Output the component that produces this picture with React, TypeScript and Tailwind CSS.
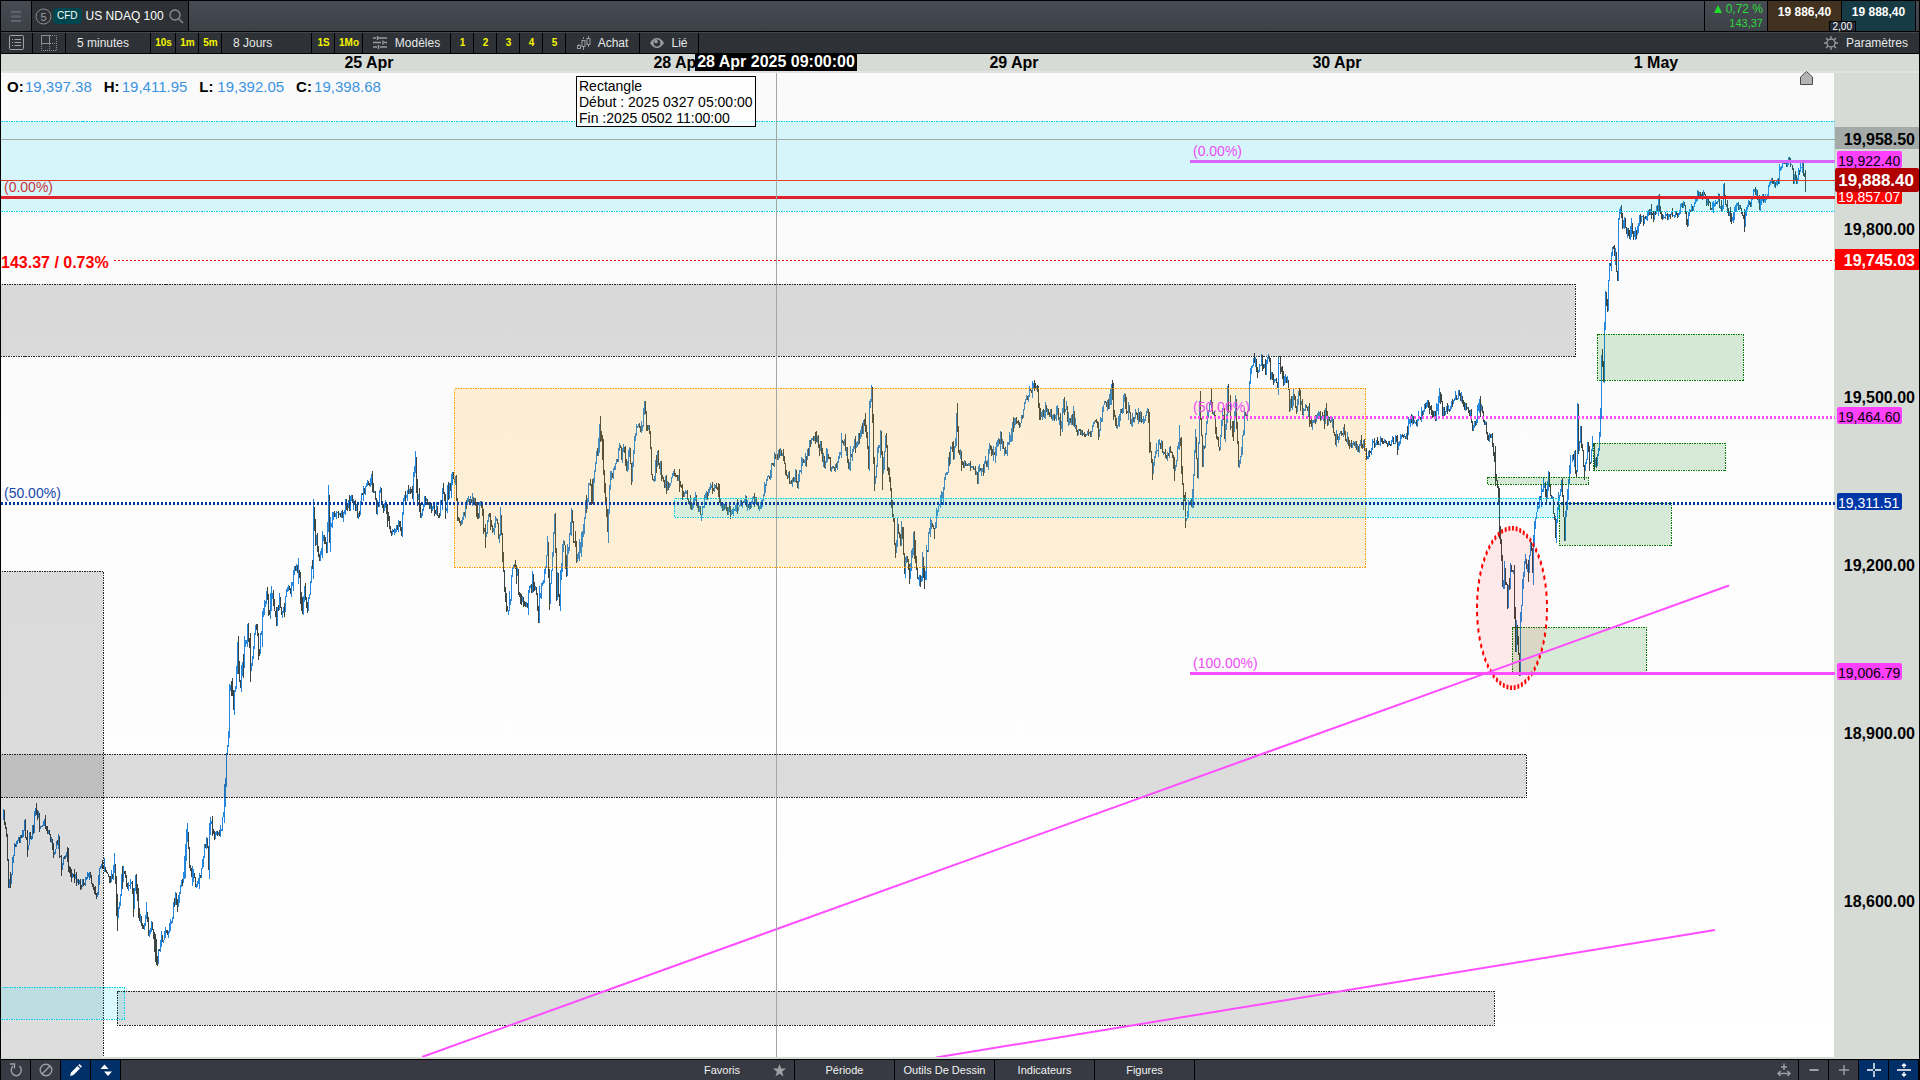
import clsx from 'clsx';

type Point = [number, number];

// swing points of the 5 minute series, in chart units
const SWINGS: Point[] = [
  [2, 818], [3, 816], [6, 830], [8, 882], [10, 877], [14, 844], [18, 840], [24, 825], [27, 845], [33, 826],
  [35, 811], [39, 825], [43, 822], [49, 834], [53, 851], [58, 841], [61, 866], [67, 851], [69, 872], [76, 879],
  [82, 885], [87, 873], [91, 881], [96, 894], [99, 871], [104, 864], [109, 881], [114, 869], [117, 912],
  [123, 868], [127, 887], [131, 884], [133, 912], [135, 882], [139, 917], [143, 928], [146, 908], [148, 932],
  [151, 930], [157, 963], [160, 941], [164, 935], [169, 930], [175, 898], [178, 906], [184, 866], [187, 833],
  [189, 862], [195, 887], [198, 884], [202, 860], [206, 841], [208, 860], [210, 818], [214, 834], [218, 835],
  [222, 823], [224, 796], [226, 760], [228, 733], [229, 694], [231, 685], [233, 710], [237, 651], [240, 687],
  [244, 651], [247, 626], [250, 667], [256, 625], [258, 658], [263, 612], [266, 596], [269, 612], [271, 594],
  [276, 623], [279, 594], [282, 616], [287, 587], [291, 591], [294, 567], [298, 569], [302, 608], [304, 587],
  [307, 605], [312, 562], [313, 508], [315, 545], [316, 537], [319, 557], [324, 535], [326, 551], [328, 503],
  [329, 537], [334, 514], [341, 514], [347, 505], [352, 498], [358, 517], [362, 494], [368, 484], [372, 480],
  [376, 510], [380, 491], [382, 508], [386, 503], [391, 532], [395, 532], [398, 525], [401, 530], [403, 501],
  [409, 489], [412, 491], [415, 462], [417, 494], [420, 514], [424, 501], [433, 507], [439, 514], [442, 489],
  [445, 507], [452, 476], [455, 484], [457, 519], [461, 523], [465, 505], [473, 498], [477, 519], [480, 501],
  [485, 541], [488, 516], [493, 530], [495, 516], [499, 541], [500, 507], [502, 562], [505, 601], [508, 614],
  [512, 573], [515, 562], [520, 601], [526, 605], [533, 576], [538, 616], [541, 584], [545, 573], [547, 537],
  [549, 601], [554, 516], [556, 598], [557, 573], [559, 603], [563, 541], [566, 573], [571, 519], [576, 558],
  [582, 533], [586, 501], [590, 480], [591, 493], [597, 450], [600, 428], [604, 487], [606, 513], [607, 523],
  [610, 477], [615, 467], [619, 443], [621, 460], [623, 445], [626, 467], [629, 450], [631, 483], [634, 437],
  [637, 427], [642, 430], [644, 408], [646, 428], [649, 427], [651, 473], [653, 480], [657, 453], [662, 477],
  [667, 487], [672, 473], [678, 477], [682, 497], [686, 493], [691, 508], [695, 497], [700, 513], [705, 498],
  [712, 487], [718, 492], [721, 507], [726, 507], [732, 513], [736, 507], [744, 500], [749, 507], [753, 498],
  [758, 508], [761, 503], [764, 487], [769, 477], [774, 457], [778, 455], [782, 453], [785, 470], [791, 483],
  [795, 473], [797, 483], [801, 463], [805, 460], [811, 440], [816, 437], [820, 450], [824, 463], [826, 450],
  [831, 472], [837, 463], [842, 440], [846, 447], [848, 467], [853, 447], [860, 432], [865, 420], [868, 463],
  [869, 403], [871, 389], [874, 490], [877, 450], [880, 437], [882, 480], [885, 437], [888, 473], [891, 507],
  [893, 517], [895, 557], [897, 520], [900, 543], [901, 522], [904, 573], [906, 557], [909, 580], [911, 553],
  [913, 540], [915, 563], [920, 587], [922, 563], [924, 583], [926, 553], [931, 523], [934, 530], [938, 507],
  [942, 493], [946, 473], [951, 447], [953, 457], [955, 440], [956, 414], [958, 450], [962, 463], [972, 467],
  [977, 475], [984, 468], [989, 447], [993, 453], [1000, 438], [1005, 453], [1009, 443], [1014, 420],
  [1019, 427], [1024, 407], [1029, 393], [1034, 385], [1037, 392], [1040, 418], [1046, 408], [1052, 417],
  [1057, 413], [1060, 427], [1063, 403], [1069, 423], [1073, 418], [1077, 432], [1084, 435], [1090, 432],
  [1095, 420], [1098, 432], [1102, 410], [1105, 402], [1108, 408], [1111, 388], [1114, 413], [1116, 428],
  [1120, 413], [1124, 400], [1132, 423], [1136, 413], [1144, 422], [1147, 413], [1149, 440], [1152, 473],
  [1155, 453], [1159, 442], [1166, 457], [1170, 450], [1174, 473], [1179, 438], [1182, 480], [1185, 520],
  [1189, 503], [1192, 497], [1195, 433], [1197, 470], [1199, 403], [1202, 463], [1206, 423], [1211, 395],
  [1215, 433], [1219, 450], [1222, 413], [1224, 433], [1227, 400], [1232, 433], [1235, 410], [1238, 463],
  [1241, 447], [1244, 413], [1247, 420], [1250, 370], [1254, 360], [1258, 373], [1261, 355], [1265, 373],
  [1268, 357], [1271, 377], [1277, 383], [1278, 360], [1283, 383], [1287, 377], [1289, 407], [1294, 397],
  [1296, 408], [1298, 395], [1302, 410], [1307, 408], [1311, 423], [1318, 413], [1324, 420], [1325, 408],
  [1328, 422], [1332, 420], [1335, 440], [1340, 432], [1344, 432], [1349, 447], [1353, 442], [1358, 447],
  [1361, 440], [1367, 457], [1372, 445], [1378, 442], [1384, 440], [1391, 445], [1395, 438], [1397, 448],
  [1401, 438], [1406, 437], [1409, 420], [1417, 423], [1424, 407], [1428, 403], [1431, 412], [1435, 415],
  [1439, 390], [1442, 413], [1448, 407], [1453, 400], [1458, 393], [1462, 403], [1468, 408], [1472, 427],
  [1476, 420], [1479, 400], [1483, 420], [1487, 433], [1491, 437], [1494, 460], [1498, 500], [1499, 530],
  [1501, 560], [1502, 587], [1504, 570], [1507, 600], [1511, 567], [1513, 573], [1515, 650], [1516, 620],
  [1517, 640], [1519, 670], [1520, 623], [1522, 587], [1525, 560], [1528, 573], [1530, 540], [1532, 567],
  [1534, 527], [1537, 507], [1540, 497], [1543, 483], [1546, 500], [1548, 474], [1551, 497], [1555, 527],
  [1558, 497], [1561, 483], [1564, 540], [1566, 507], [1569, 470], [1570, 455], [1574, 457], [1576, 477],
  [1577, 408], [1578, 453], [1580, 430], [1584, 477], [1587, 443], [1589, 467], [1592, 445], [1596, 468],
  [1598, 450], [1599, 433], [1600, 410], [1601, 357], [1603, 375], [1604, 323], [1605, 293], [1607, 305],
  [1609, 270], [1612, 247], [1615, 258], [1617, 275], [1618, 220], [1620, 212], [1622, 227], [1624, 222],
  [1629, 237], [1631, 227], [1633, 240], [1637, 227], [1639, 217], [1643, 220], [1647, 212], [1651, 212],
  [1653, 218], [1658, 203], [1661, 218], [1665, 218], [1673, 215], [1679, 212], [1681, 203], [1683, 207],
  [1687, 222], [1689, 212], [1692, 210], [1695, 198], [1702, 193], [1707, 203], [1713, 207], [1718, 198],
  [1721, 212], [1723, 190], [1727, 210], [1731, 217], [1735, 212], [1737, 203], [1742, 213], [1744, 226],
  [1746, 207], [1750, 203], [1753, 190], [1757, 195], [1759, 208], [1762, 198], [1765, 200], [1769, 183],
  [1773, 182], [1777, 185], [1780, 168], [1783, 163], [1789, 162], [1793, 177], [1797, 180], [1800, 165],
  [1802, 162], [1805, 182],
];

const buildCandles = () => {
  let seed = 7;
  const random = () => {
    seed = (seed * 16807) % 2147483647;
    return seed / 2147483647;
  };
  let up = '';
  let down = '';
  let segment = 0;
  let open = SWINGS[0][1];
  for (let x = 3; x <= 1805; x += 1) {
    let high = open;
    let low = open;
    while (segment < SWINGS.length - 2 && SWINGS[segment + 1][0] <= x) {
      segment += 1;
      high = Math.min(high, SWINGS[segment][1]);
      low = Math.max(low, SWINGS[segment][1]);
    }
    const [x0, y0] = SWINGS[segment];
    const [x1, y1] = SWINGS[segment + 1];
    const range = Math.min(Math.abs(y1 - y0), 40);
    const close = y0 + ((y1 - y0) * (x - x0)) / (x1 - x0) + (random() - 0.5) * (6 + range * 0.3);
    const wick = random() > 0.6 ? 4 + range * 0.25 : 2;
    high = Math.round(Math.min(high, close) - random() * wick);
    low = Math.round(Math.max(low, close) + random() * wick);
    const bar = `M${x}.5 ${high}V${low}`;
    if (close < open) {
      up += bar;
    } else {
      down += bar;
    }
    open = close;
  }
  return { up, down };
};

const candles = buildCandles();

const ZONES = [
  { x: 0, y: 121, w: 1836, h: 90, fill: '#00e5ff', stroke: '#00cfee' },
  { x: -2, y: 284, w: 1577, h: 72, fill: '#1c1c1c', stroke: '#222222' },
  { x: -2, y: 571, w: 105, h: 500, fill: '#1c1c1c', stroke: '#222222' },
  { x: -2, y: 754, w: 1528, h: 43, fill: '#1c1c1c', stroke: '#222222' },
  { x: 117, y: 991, w: 1377, h: 34, fill: '#1c1c1c', stroke: '#222222' },
  { x: -2, y: 987, w: 126, h: 32, fill: '#00e5ff', stroke: '#00cfee' },
  { x: 454, y: 388, w: 911, h: 179, fill: '#ffa500', stroke: '#ff9d00' },
  { x: 674, y: 498, w: 885, h: 19, fill: '#00e5ff', stroke: '#00cfee' },
  { x: 1487, y: 477, w: 101, h: 7, fill: '#008000', stroke: '#007a00' },
  { x: 1559, y: 503, w: 112, h: 42, fill: '#008000', stroke: '#007a00' },
  { x: 1593, y: 443, w: 132, h: 27, fill: '#008000', stroke: '#007a00' },
  { x: 1597, y: 334, w: 146, h: 46, fill: '#008000', stroke: '#007a00' },
  { x: 1512, y: 627, w: 134, h: 47, fill: '#008000', stroke: '#007a00' },
];

const DAYS = [
  { label: '25 Apr', x: 369 },
  { label: '28 Apr', x: 678 },
  { label: '29 Apr', x: 1014 },
  { label: '30 Apr', x: 1337 },
  { label: '1 May', x: 1656 },
];

const PRICES = [
  { label: '19,800.00', y: 229 },
  { label: '19,500.00', y: 397 },
  { label: '19,200.00', y: 565 },
  { label: '18,900.00', y: 733 },
  { label: '18,600.00', y: 901 },
];

const LEVELS = [
  { label: '19,922.40', y: 161, fill: '#ff40ff', text: '#000000' },
  { label: '19,857.07', y: 197, fill: '#ff0000', text: '#ffffff' },
  { label: '19,464.60', y: 417, fill: '#ff40ff', text: '#000000' },
  { label: '19,311.51', y: 503, fill: '#0037a8', text: '#ffffff' },
  { label: '19,006.79', y: 673, fill: '#ff40ff', text: '#000000' },
];

const OHLC = [
  { key: 'O', value: '19,397.38' },
  { key: 'H', value: '19,411.95' },
  { key: 'L', value: '19,392.05' },
  { key: 'C', value: '19,398.68' },
];

const Chart: React.FC = () => (
  <svg viewBox="1 54 1918 1005" className="h-full w-full">
    <defs>
      <linearGradient id="plot" x1="0" y1="0" x2="0" y2="1">
        <stop offset="0" stopColor="#fafafa" />
        <stop offset="1" stopColor="#ffffff" />
      </linearGradient>
      <clipPath id="plot-clip">
        <rect x="1" y="73" width="1834" height="984" />
      </clipPath>
    </defs>
    <rect x="1" y="54" width="1918" height="1005" fill="#d6dbd6" />
    <rect x="1" y="71" width="1918" height="2" fill="#e2e2e2" />
    <rect x="1" y="73" width="1833" height="984" fill="url(#plot)" />

    <g className="font-bold" fontSize="16" textAnchor="middle">
      {DAYS.map((day) => (
        <text key={day.label} x={day.x} y="68">
          {day.label}
        </text>
      ))}
    </g>

    <g clipPath="url(#plot-clip)">
      <g fill="none" strokeWidth="1" shapeRendering="crispEdges">
        <path d={candles.down} stroke="#3d4543" />
        <path d={candles.up} stroke="#2487dd" />
      </g>
      {ZONES.map((zone) => (
        <g key={`${zone.x}-${zone.y}`} shapeRendering="crispEdges">
          <rect x={zone.x} y={zone.y} width={zone.w} height={zone.h} fill={zone.fill} fillOpacity="0.15" />
          <rect
            x={zone.x + 0.5}
            y={zone.y + 0.5}
            width={zone.w}
            height={zone.h}
            fill="none"
            stroke={zone.stroke}
            strokeDasharray="2 1 1 1"
          />
        </g>
      ))}

      {/* capitulation low */}
      <circle
        r="35"
        transform="translate(1512 608) scale(1 2.28)"
        fill="#ff0000"
        fillOpacity="0.08"
        stroke="#ff0000"
        strokeWidth="2"
        strokeDasharray="1.9 1.76"
      />
      <g stroke="#ff4dff" strokeWidth="2">
        <path d="M422 1057L1729 585.5" />
        <path d="M936 1057.5L1715 930" />
      </g>

      <g shapeRendering="crispEdges" fill="none">
        <path d="M1190 161.5H1835" stroke="#d966ff" strokeWidth="3" />
        <path d="M1190 417.5H1835" stroke="#ff4dff" strokeWidth="3" strokeDasharray="2 2" />
        <path d="M1190 673.5H1835" stroke="#ff4dff" strokeWidth="3" />
        <path d="M1 503.5H1835" stroke="#0037a0" strokeWidth="3" strokeDasharray="2 2" />
        <path d="M1 197.5H1835" stroke="#e0202a" strokeWidth="3" />
        <path d="M114 260.5H1835" stroke="#f00000" strokeDasharray="2 2" />
        <path d="M1 180.5H1835" stroke="#e63a28" />
        <path d="M1 139.5H1835M776.5 73V1057" stroke="#a2a7a5" />
      </g>
    </g>

    <g fontSize="14">
      <text x="4" y="192" fill="#cf3340">(0.00%)</text>
      <text x="4" y="498" fill="#1a48ad">(50.00%)</text>
      <g fill="#ee4df5">
        <text x="1193" y="156">(0.00%)</text>
        <text x="1193" y="412">(50.00%)</text>
        <text x="1193" y="668">(100.00%)</text>
      </g>
    </g>
    <text x="1" y="268" fontSize="16" fill="#ff0000" className="font-bold">
      143.37 / 0.73%
    </text>

    <path d="M1800.5 84.5V77L1806.5 71.5L1812.5 77V84.5Z" fill="#b4b4b4" stroke="#4a4a4a" />

    {/* price scale */}
    <rect x="1835" y="127" width="84" height="22" fill="#a3aaa8" />
    <rect x="1835" y="249" width="84" height="21" fill="#ff0000" />
    {LEVELS.map((level) => (
      <g key={level.label}>
        <rect x="1837" y={level.y - 10} width="65" height="17" rx="2" fill={level.fill} />
        <text x="1838" y={level.y + 5} fontSize="14" fill={level.text}>
          {level.label}
        </text>
      </g>
    ))}
    <rect x="1835" y="168" width="84" height="24" rx="2" fill="#b00000" />
    <g className="font-bold" fontSize="16" textAnchor="end">
      <text x="1915" y="145">19,958.50</text>
      <text x="1914" y="186" fontSize="17" fill="#ffffff">19,888.40</text>
      <text x="1915" y="266" fill="#ffffff">19,745.03</text>
      {PRICES.map((price) => (
        <text key={price.label} x="1915" y={price.y + 6}>
          {price.label}
        </text>
      ))}
    </g>

    {/* crosshair time */}
    <rect x="695" y="54" width="162" height="17" />
    <text x="776" y="67" fontSize="16" textAnchor="middle" fill="#ffffff" className="font-bold">
      28 Apr 2025 09:00:00
    </text>
  </svg>
);

type CellProps = {
  className: string;
  label?: string;
  children: React.ReactNode;
};

const ToolCell: React.FC<CellProps> = ({ className, label, children }) => (
  <button
    type="button"
    aria-label={label}
    className={clsx('flex h-full shrink-0 items-center border-r border-black pb-px', className)}
  >
    {children}
  </button>
);

const QuickCell: React.FC<CellProps> = ({ className, children }) => (
  <ToolCell className={clsx('justify-center pl-px text-[10px] font-bold text-[#f5f500]', className)}>
    {children}
  </ToolCell>
);

const TopBar: React.FC = () => (
  <header className="flex h-8 shrink-0 border-t border-b border-black bg-linear-to-b from-[#474c54] to-[#3c4148] text-xs text-white">
    <button type="button" aria-label="Menu" className="flex w-[31px] items-center justify-center border-r border-black">
      <svg width="10" height="11" stroke="#62666c" strokeWidth="2">
        <path d="M0 1H10M0 5.5H10M0 10H10" />
      </svg>
    </button>
    <div className="flex items-center border-r border-black bg-[#2e3236] px-[3px]">
      <svg width="17" height="17" viewBox="0 0 17 17">
        <circle cx="8.5" cy="8.5" r="7.5" fill="none" stroke="#8b8f93" />
        <text x="8.5" y="12.5" fontSize="11" textAnchor="middle" fill="#9a9da1">5</text>
      </svg>
      <span className="ml-px rounded-sm bg-[#00474f] px-1 text-[10px] leading-4">CFD</span>
      <span className="ml-1">US NDAQ 100</span>
      <button type="button" aria-label="Rechercher" className="ml-1">
        <svg width="17" height="17" fill="none" stroke="#8b8f93" strokeWidth="1.3">
          <circle cx="7" cy="7" r="5" />
          <path d="M10.6 10.6L15 15" />
        </svg>
      </button>
    </div>
    <div className="relative ml-auto flex">
      <div className="flex w-16 flex-col items-end border-x border-black pt-px pr-1 leading-[14px] text-[#2fd83a]">
        <span className="flex items-center gap-1">
          <svg width="8" height="8" fill="#22dd2e">
            <path d="M4 0L8 8H0Z" />
          </svg>
          0,72 %
        </span>
        <span className="text-[11px]">143,37</span>
      </div>
      <button type="button" className="w-[74px] border-r border-black bg-[#41311f] pb-2 font-bold">
        19 886,40
      </button>
      <button type="button" className="w-[74px] border-r border-black bg-[#173b45] pb-2 font-bold">
        19 888,40
      </button>
      <span className="w-[3px]" />
      <span className="absolute right-[63px] bottom-0 border border-b-0 border-black bg-[#242b37] px-[3px] text-[10px] leading-[9px]">
        2,00
      </span>
    </div>
  </header>
);

const Toolbar: React.FC = () => (
  <nav className="flex h-[22px] shrink-0 border-t border-b border-t-[#44484d] border-b-black bg-[#2e3236] text-xs text-[#e6e8ea]">
    <ToolCell label="Liste" className="w-8 justify-center">
      <svg width="15" height="15" fill="none" stroke="#a0a3a6">
        <rect x="0.5" y="0.5" width="14" height="14" rx="1" />
        <path d="M3 4.5H4M5.5 4.5H12M3 7.5H4M5.5 7.5H12M3 10.5H4M5.5 10.5H12" />
      </svg>
    </ToolCell>
    <ToolCell label="Disposition" className="w-[33px] justify-center">
      <svg width="16" height="16" fill="none" stroke="#8d9093">
        <rect x="0.5" y="0.5" width="8" height="8" />
        <path d="M9 0.5H15.5V15.5H0.5V9M8.5 9V15M9 8.5H15" strokeDasharray="1 1" />
      </svg>
    </ToolCell>
    <ToolCell className="w-[85px] pl-[11px]">5 minutes</ToolCell>
    <QuickCell className="w-[25px]">10s</QuickCell>
    <QuickCell className="w-[23px]">1m</QuickCell>
    <QuickCell className="w-[23px]">5m</QuickCell>
    <ToolCell className="w-[90px] pl-[11px]">8 Jours</ToolCell>
    <QuickCell className="w-[23px]">1S</QuickCell>
    <QuickCell className="w-[28px]">1Mo</QuickCell>
    <ToolCell className="w-[88px] justify-center gap-2">
      <svg width="14" height="13" fill="none" stroke="#9a9da0" strokeWidth="1.4">
        <path d="M0 2H3M5 2H14M4.5 0V4M0 6.5H8M11 6.5H14M10 4.5V8.5M0 11H4M7 11H14M5.5 9V13" />
      </svg>
      Modèles
    </ToolCell>
    <QuickCell className="w-[23px]">1</QuickCell>
    <QuickCell className="w-[23px]">2</QuickCell>
    <QuickCell className="w-[23px]">3</QuickCell>
    <QuickCell className="w-[23px]">4</QuickCell>
    <QuickCell className="w-[23px]">5</QuickCell>
    <ToolCell className="w-[74px] justify-center gap-[7px]">
      <svg width="14" height="14" fill="none" stroke="#9a9da0">
        <path d="M2 8V9M2 12V13M6.5 1V3M6.5 11V14M11.5 0V2M11.5 8V11" />
        <rect x="0.5" y="9.5" width="3" height="3" />
        <rect x="5" y="4.5" width="3" height="6" />
        <rect x="10" y="2.5" width="3" height="6" />
      </svg>
      Achat
    </ToolCell>
    <ToolCell className="w-[59px] justify-center gap-[7px]">
      <svg width="14" height="12" viewBox="0 0 14 12">
        <path d="M0 6Q3 1 7 1T14 6Q11 11 7 11T0 6Z" fill="#9a9da0" />
        <circle cx="7" cy="6" r="3.4" fill="#2e3236" />
        <circle cx="6" cy="4.6" r="1.8" fill="#9a9da0" />
      </svg>
      Lié
    </ToolCell>
    <button type="button" className="ml-auto flex items-center gap-2 pr-[11px] pb-px">
      <svg width="14" height="14" fill="none" stroke="#9a9da0" strokeWidth="1.3">
        <circle cx="7" cy="7" r="4" />
        <path d="M7 0V2.5M7 11.5V14M0 7H3M11 7H14M2 2L4 4M10 10L12 12M12 2L10 4M4 10L2 12" />
      </svg>
      Paramètres
    </button>
  </nav>
);

type FootIconProps = {
  label: string;
  active?: boolean;
  children: React.ReactNode;
};

const FootIcon: React.FC<FootIconProps> = ({ label, active, children }) => (
  <button
    type="button"
    aria-label={label}
    className={clsx(
      'flex w-[30px] items-center justify-center border-r border-black',
      active ? 'bg-[#003067] text-white' : 'text-[#9da0a4]',
    )}
  >
    <svg width="14" height="14" viewBox="0 0 14 14" fill="none" stroke="currentColor" strokeWidth="1.4">
      {children}
    </svg>
  </button>
);

const BottomBar: React.FC = () => (
  <footer className="flex h-[21px] shrink-0 justify-between border-t border-black bg-[#373a42] text-[11px] text-[#f2f3f4]">
    <div className="flex">
      <FootIcon label="Actualiser">
        <path d="M4 3A5 5.5 0 1 0 10.5 3" />
        <path d="M1 1H5.5V5.5" />
      </FootIcon>
      <FootIcon label="Effacer">
        <circle cx="7" cy="7" r="5.8" />
        <path d="M3 11L11 3" />
      </FootIcon>
      <FootIcon label="Dessiner" active>
        <path d="M1 13L2 9.5L8.5 3L11 5.5L4.5 12ZM9.3 2.2L10.5 1L13 3.5L11.8 4.7Z" fill="currentColor" stroke="none" />
      </FootIcon>
      <FootIcon label="Échelle" active>
        <path d="M1.5 6L5.5 1.5L9.5 6ZM5 8.5H13L9 13Z" fill="currentColor" stroke="none" />
      </FootIcon>
    </div>
    <div className="flex">
      <div className="flex w-[100px] items-center justify-between border-r border-black pr-2 pl-[9px]">
        <button type="button">Favoris</button>
        <button type="button" aria-label="Ajouter aux favoris">
          <svg width="13" height="13" viewBox="0 0 13 13" fill="#9da0a4">
            <path d="M6.5 0L8.2 4.6H13L9.1 7.7L10.5 12.6L6.5 9.7L2.5 12.6L3.9 7.7L0 4.6H4.8Z" />
          </svg>
        </button>
      </div>
      {['Période', 'Outils De Dessin', 'Indicateurs', 'Figures'].map((item) => (
        <button key={item} type="button" className="w-[100px] border-r border-black">
          {item}
        </button>
      ))}
    </div>
    <div className="flex">
      <FootIcon label="Ajuster">
        <path d="M7 0.5V7M4 4H10M1 10.5H13M3.5 8L1 10.5L3.5 13M10.5 8L13 10.5L10.5 13" />
      </FootIcon>
      <FootIcon label="Zoom arrière">
        <path d="M2.5 7H11.5" strokeWidth="2" />
      </FootIcon>
      <FootIcon label="Zoom avant">
        <path d="M2 7H12M7 2V12" />
      </FootIcon>
      <FootIcon label="Réticule" active>
        <path d="M0 7H6M8 7H14M7 0V6M7 8V14" />
      </FootIcon>
      <FootIcon label="Échelle verticale" active>
        <path d="M0 7H14M7 1V5M5 3L7 1L9 3M7 9V13M5 11L7 13L9 11" />
      </FootIcon>
    </div>
  </footer>
);

const App: React.FC = () => (
  <div className="flex h-screen flex-col border-x border-black bg-[#d6dbd6] font-['Liberation_Sans',Arial,sans-serif]">
    <TopBar />
    <Toolbar />
    <main className="relative min-h-0 flex-1">
      <Chart />
      <dl className="absolute top-6 left-1.5 flex gap-3 text-[15px] leading-[18px]">
        {OHLC.map((item) => (
          <div key={item.key} className="flex gap-px">
            <dt className="w-[17px] font-bold">{item.key}:</dt>
            <dd className="text-[#3b93e0]">{item.value}</dd>
          </div>
        ))}
      </dl>
      <div className="absolute top-[22px] left-[575px] border border-black bg-white/80 px-0.5 pt-px text-sm leading-4">
        <p>Rectangle</p>
        <p>Début : 2025 0327 05:00:00</p>
        <p>Fin :2025 0502 11:00:00</p>
      </div>
    </main>
    <BottomBar />
  </div>
);

export default App;
